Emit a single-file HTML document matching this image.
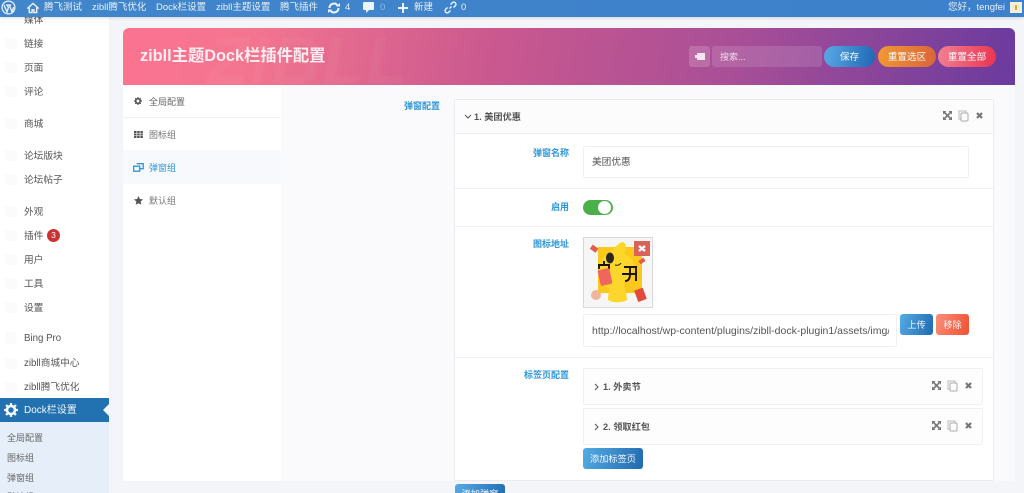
<!DOCTYPE html>
<html lang="zh"><head><meta charset="utf-8"><title>zibll Dock</title>
<style>
*{box-sizing:border-box}
html,body{margin:0;padding:0;width:1024px;height:493px;overflow:hidden;background:#f4f5f9;font-family:"Liberation Sans","Noto Sans CJK SC",sans-serif;color:#444}
#w{position:relative;width:1024px;height:493px;overflow:hidden;background:#f4f5f9}
.a{position:absolute;white-space:nowrap}
.t{position:absolute;white-space:nowrap;line-height:14px;font-size:10px}
.bar{position:absolute;left:0;top:0;width:1024px;height:17px;background:linear-gradient(90deg,#4186cb,#3d80cb);box-shadow:0 1px 3px rgba(0,0,0,.15);z-index:3}
.bar .t{color:#e8f0f8;top:1px;line-height:13px;font-size:9.500px}
.side{position:absolute;left:0;top:17px;width:109px;height:476px;background:#fff;overflow:hidden}
.m{color:#555;font-size:9.700px;left:24px}
.g{position:absolute;left:5px;width:12px;height:12px;border-radius:4px;background:#fbfbfc}
.sub{color:#666;font-size:9px;left:7px}
.lb{color:#2c96d8;font-size:9px;font-weight:bold;text-align:right;right:0}
.btn{position:absolute;color:#f4f8fc;text-align:center;font-size:9.200px}
.box{position:absolute;background:#fff;border:1px solid #eff0f3;border-radius:2px}
.hr{position:absolute;height:1px;background:#f0f1f4}
</style></head><body><div id="w">

<div class="bar">
<svg class="a" style="left:1px;top:0" width="15" height="15" viewBox="0 0 15 15"><circle cx="7.500" cy="7.500" r="6.400" fill="none" stroke="#eef4fb" stroke-width="1.200"/><path d="M3 5l3 7 1.500-4.500L6 5h4l-1.500.3L11 12l1.700-5" fill="none" stroke="#eef4fb" stroke-width="1.300"/></svg>
<svg class="a" style="left:27px;top:2px" width="12" height="12" viewBox="0 0 13 12"><path d="M6.500 1L1 6h1.500v5H5.500V8h2v3h3V6H12z" fill="none" stroke="#eef4fb" stroke-width="1.500"/></svg>
<span class="t" style="left:44px">腾飞测试</span>
<span class="t" style="left:92px">zibll腾飞优化</span>
<span class="t" style="left:156px">Dock栏设置</span>
<span class="t" style="left:216px">zibll主题设置</span>
<span class="t" style="left:280px">腾飞插件</span>
<svg class="a" style="left:328px;top:2px" width="12" height="12" viewBox="0 0 12 12"><path d="M1.500 6a4.500 4.500 0 0 1 8-2.800M10.500 6a4.500 4.500 0 0 1-8 2.800" fill="none" stroke="#eef4fb" stroke-width="2"/><path d="M8 4.500h4V1zM4 7.500H0V11z" fill="#eef4fb"/></svg>
<span class="t" style="left:345px">4</span>
<svg class="a" style="left:363px;top:2px" width="11" height="12" viewBox="0 0 11 12"><path d="M1 0h9a1 1 0 0 1 1 1v6a1 1 0 0 1-1 1H6l-3 3V8H1a1 1 0 0 1-1-1V1a1 1 0 0 1 1-1z" fill="#eef4fb"/></svg>
<span class="t" style="left:380px;color:#8fb9e2">0</span>
<svg class="a" style="left:398px;top:3px" width="10" height="10" viewBox="0 0 10 10"><path d="M4 0h2v4h4v2H6v4H4V6H0V4h4z" fill="#eef4fb"/></svg>
<span class="t" style="left:414px">新建</span>
<svg class="a" style="left:444px;top:1px" width="13" height="13" viewBox="0 0 13 13"><path d="M5.500 7.500l2-2M3.500 6.500l-1.800 1.800a2 2 0 0 0 3 3l1.800-1.800M9.500 6.500l1.800-1.800a2 2 0 0 0-3-3L6.500 3.500" fill="none" stroke="#eef4fb" stroke-width="1.400"/></svg>
<span class="t" style="left:461px">0</span>
<span class="t" style="left:948px">您好，tengfei</span>
<div class="a" style="left:1010px;top:2px;width:12px;height:11px;background:#f6efd8"></div>
<div class="a" style="left:1015px;top:5px;width:2px;height:5px;background:#e0a92c"></div>
</div>

<div class="side">
<div class="g" style="top:20px"></div><div class="g" style="top:44px"></div><div class="g" style="top:68px"></div><div class="g" style="top:100px"></div><div class="g" style="top:132px"></div><div class="g" style="top:156px"></div><div class="g" style="top:188px"></div><div class="g" style="top:212px"></div><div class="g" style="top:236px"></div><div class="g" style="top:260px"></div><div class="g" style="top:284px"></div><div class="g" style="top:315px"></div><div class="g" style="top:340px"></div><div class="g" style="top:364px"></div>
<span class="t m" style="top:-3px">媒体</span>
<span class="t m" style="top:21px">链接</span>
<span class="t m" style="top:45px">页面</span>
<span class="t m" style="top:69px">评论</span>
<span class="t m" style="top:101px">商城</span>
<span class="t m" style="top:133px">论坛版块</span>
<span class="t m" style="top:157px">论坛帖子</span>
<span class="t m" style="top:189px">外观</span>
<span class="t m" style="top:213px">插件</span>
<div class="a" style="left:47px;top:212px;width:13px;height:13px;border-radius:50%;background:#ca3232;color:#fff;font-size:8.500px;line-height:13px;text-align:center">3</div>
<span class="t m" style="top:237px">用户</span>
<span class="t m" style="top:261px">工具</span>
<span class="t m" style="top:285px">设置</span>
<span class="t m" style="top:315px">Bing Pro</span>
<span class="t m" style="top:340px">zibll商城中心</span>
<span class="t m" style="top:364px">zibll腾飞优化</span>
<div class="a" style="left:0;top:381px;width:109px;height:24px;background:#2271b1"></div>
<svg class="a" style="left:4px;top:386px" width="14" height="14" viewBox="0 0 14 14"><circle cx="7" cy="7" r="4" fill="none" stroke="#f3f7fb" stroke-width="2.600"/><path d="M7 0v3M7 11v3M0 7h3M11 7h3M2 2l2.200 2.200M9.800 9.800L12 12M12 2L9.800 4.200M4.200 9.800L2 12" stroke="#f3f7fb" stroke-width="2.200"/></svg>
<span class="t" style="left:24px;top:387px;color:#f3f7fb;font-size:10px">Dock栏设置</span>
<div class="a" style="left:103px;top:387px;width:0;height:0;border:6px solid transparent;border-left:0;border-right-color:#f4f5f9"></div>
<div class="a" style="left:0;top:405px;width:109px;height:71px;background:#e6eff9"></div>
<span class="t sub" style="top:414px">全局配置</span>
<span class="t sub" style="top:434px">图标组</span>
<span class="t sub" style="top:454px">弹窗组</span>
<span class="t sub" style="top:473px">默认组</span>
</div>

<div class="a" style="left:123px;top:84px;width:892px;height:397px;background:#fafafc"></div>
<div class="a" style="left:123px;top:84px;width:158px;height:397px;background:#fff"></div>

<div class="a" style="left:123px;top:28px;width:892px;height:57px;border-radius:6px 6px 0 0;background:linear-gradient(100deg,#fb7390 0%,#f4758f 14%,#c9588f 42%,#a94f97 68%,#6a3b9e 100%);overflow:hidden">
<div class="a" style="left:84px;top:-3px;font-size:68px;font-weight:bold;font-style:italic;color:rgba(255,255,255,.035);line-height:72px;letter-spacing:2px">ZIBLL</div>
<span class="t" style="left:17px;top:18px;font-size:16.300px;line-height:20px;font-weight:bold;color:#fbeef2">zibll主题Dock栏插件配置</span>
<div class="a" style="left:566px;top:18px;width:21px;height:21px;border-radius:3px;background:rgba(255,255,255,.17)"></div>
<div class="a" style="left:572px;top:25px;width:10px;height:7px;background:#f3e6f1;border-left:2px dotted #b968a4"></div>
<div class="a" style="left:589px;top:18px;width:110px;height:21px;border-radius:3px;background:rgba(255,255,255,.13)"></div>
<span class="t" style="left:597px;top:22px;font-size:9px;line-height:15px;color:#f0dcea">搜索...</span>
<div class="btn" style="left:701px;top:18px;width:51px;height:21px;line-height:23px;border-radius:11px;background:linear-gradient(100deg,#5aa9e6,#1e68b4);font-size:9.600px">保存</div>
<div class="btn" style="left:755px;top:18px;width:58px;height:21px;line-height:23px;border-radius:11px;background:linear-gradient(100deg,#f09a34,#d9643a);font-size:9.600px">重置选区</div>
<div class="btn" style="left:815px;top:18px;width:58px;height:21px;line-height:23px;border-radius:11px;background:linear-gradient(100deg,#f18192,#ea3350);font-size:9.600px">重置全部</div>
</div>

<!-- left nav -->
<div class="hr" style="left:123px;top:117px;width:158px"></div>
<div class="a" style="left:123px;top:150px;width:158px;height:34px;background:#f8f9fc"></div>
<svg class="a" style="left:134px;top:97px" width="8" height="8" viewBox="0 0 8 8"><circle cx="4" cy="4" r="2.300" fill="none" stroke="#555" stroke-width="1.700"/><path d="M4 0v1.500M4 6.500V8M0 4h1.500M6.500 4H8M1.200 1.200l1 1M5.800 5.800l1 1M6.800 1.200l-1 1M2.200 5.800l-1 1" stroke="#555" stroke-width="1.200"/></svg>
<span class="t" style="left:149px;top:95px;color:#666;font-size:9px">全局配置</span>
<svg class="a" style="left:134px;top:131px" width="9" height="7" viewBox="0 0 9 7" fill="#555"><rect width="2.500" height="2"/><rect x="3.200" width="2.500" height="2"/><rect x="6.400" width="2.500" height="2"/><rect y="2.500" width="2.500" height="2"/><rect x="3.200" y="2.500" width="2.500" height="2"/><rect x="6.400" y="2.500" width="2.500" height="2"/><rect y="5" width="2.500" height="2"/><rect x="3.200" y="5" width="2.500" height="2"/><rect x="6.400" y="5" width="2.500" height="2"/></svg>
<span class="t" style="left:149px;top:128px;color:#777;font-size:9px">图标组</span>
<svg class="a" style="left:133px;top:163px" width="11" height="9" viewBox="0 0 11 9"><path d="M.7 3.200h6v5h-6z" fill="none" stroke="#2c96d8" stroke-width="1.300"/><path d="M3.700 .7h6.500v5H7" fill="none" stroke="#2c96d8" stroke-width="1.300"/></svg>
<span class="t" style="left:149px;top:161px;color:#2c96d8;font-size:9px">弹窗组</span>
<svg class="a" style="left:134px;top:196px" width="9" height="9" viewBox="0 0 10 10"><path d="M5 0l1.500 3.300 3.500.4-2.600 2.400.7 3.600L5 8 1.900 9.700l.7-3.600L0 3.700l3.500-.4z" fill="#555"/></svg>
<span class="t" style="left:149px;top:194px;color:#777;font-size:9px">默认组</span>

<!-- content -->
<span class="t lb" style="left:404px;right:auto;top:99px;width:36px">弹窗配置</span>

<div class="box" style="left:454px;top:99px;width:540px;height:382px;background:#fff;border-color:#e9ebef"></div>
<div class="a" style="left:455px;top:100px;width:538px;height:34px;background:#fcfcfd;border-bottom:1px solid #eceef2"></div>
<svg class="a" style="left:464px;top:114px" width="8" height="6" viewBox="0 0 8 6"><path d="M1 1l3 3 3-3" fill="none" stroke="#555" stroke-width="1"/></svg>
<span class="t" style="left:474px;top:110px;font-size:9.200px;font-weight:bold;color:#555">1. 美团优惠</span>

<svg class="a" style="left:943px;top:111px" width="9" height="9" viewBox="0 0 9 9"><path d="M0 0h3.500L0 3.500zM9 0v3.500L5.500 0zM0 9V5.500L3.500 9zM9 9H5.500L9 5.500z" fill="#777"/><path d="M1.500 1.500l6 6M7.500 1.500l-6 6" stroke="#777" stroke-width="1.600"/></svg>
<svg class="a" style="left:958px;top:110px" width="11" height="12" viewBox="0 0 11 12"><path d="M8 2.500V1H1v8h2" fill="none" stroke="#bbb"/><rect x="3" y="3" width="7" height="8" rx="1" fill="none" stroke="#aaa"/></svg>
<svg class="a" style="left:976px;top:112px" width="7" height="7" viewBox="0 0 7 7"><path d="M1 1l5 5M6 1L1 6" stroke="#777" stroke-width="2.200"/></svg>

<span class="t lb" style="left:533px;right:auto;top:146px;width:36px">弹窗名称</span>
<div class="box" style="left:583px;top:146px;width:386px;height:32px"></div>
<span class="t" style="left:592px;top:156px;font-size:9.700px;color:#555">美团优惠</span>
<div class="hr" style="left:455px;top:188px;width:538px"></div>

<span class="t lb" style="left:551px;right:auto;top:200px;width:18px">启用</span>
<div class="a" style="left:583px;top:200px;width:30px;height:15px;border-radius:8px;background:#4cb04a"></div>
<div class="a" style="left:598px;top:201px;width:13px;height:13px;border-radius:50%;background:#fff"></div>
<div class="hr" style="left:455px;top:226px;width:538px"></div>

<span class="t lb" style="left:533px;right:auto;top:237px;width:36px">图标地址</span>
<div class="a" style="left:583px;top:237px;width:70px;height:71px;border:1px solid #d9d9d9;background:#f6f6f6"></div>
<svg class="a" style="left:584px;top:238px" width="68" height="69" viewBox="0 0 68 69">
<rect x="14" y="9" width="44" height="46" fill="#fcc81c"/>
<path d="M24 16c4-3 10-11 14-12 4 0 5 5 2 12 8 3 12 8 9 15-2 6-6 10-9 14 0 5 3 10 3 17-5 3-14 3-19 0 0-4 1-8 1-12-7-2-12-9-11-18 0-7 5-13 10-16z" fill="#fcd62a"/>
<ellipse cx="26" cy="20" rx="4" ry="5.500" fill="#2b2420"/>
<path d="M31 27q4 1 6-2" fill="none" stroke="#2b2420" stroke-width="1"/>
<path d="M20 23v3M14 27h12M15 27v4M25 27v4M40 29h13M46 29v7c0 5-2 7-5 7M52 29v14M38 36h15" stroke="#1b1408" stroke-width="1.900" fill="none"/>
<rect x="15" y="31" width="12" height="16" rx="2" transform="rotate(-12 21 39)" fill="#f0665f"/>
<rect x="52" y="51" width="9" height="12" transform="rotate(-20 56 57)" fill="#e24a3c"/>
<circle cx="12" cy="57" r="5" fill="#eeb79a"/>
<rect x="7" y="8" width="7" height="5" transform="rotate(35 10 10)" fill="#e25d50"/>
<rect x="55" y="21" width="6" height="4" transform="rotate(-35 58 23)" fill="#e25d50"/>
<rect x="50" y="3" width="16" height="15" fill="#d9625a"/>
<path d="M55 8l6 5M61 8l-6 5" stroke="#fff" stroke-width="2.400"/>
</svg>

<div class="box" style="left:583px;top:314px;width:314px;height:33px"></div>
<span class="a" style="left:592px;top:324px;width:297px;overflow:hidden;font-size:10.500px;line-height:14px;color:#555">http://localhost/wp-content/plugins/zibll-dock-plugin1/assets/img/meituan.png</span>
<div class="btn" style="left:900px;top:314px;width:33px;height:21px;line-height:22px;border-radius:3px;background:linear-gradient(110deg,#56abe4,#1f69b0)">上传</div>
<div class="btn" style="left:936px;top:314px;width:33px;height:21px;line-height:22px;border-radius:3px;background:linear-gradient(110deg,#fa8f7a,#f0502f)">移除</div>
<div class="hr" style="left:455px;top:357px;width:538px"></div>

<span class="t lb" style="left:523px;right:auto;top:368px;width:46px">标签页配置</span>

<div class="box" style="left:583px;top:368px;width:400px;height:37px;background:#fdfdfd"></div>
<svg class="a" style="left:594px;top:383px" width="6" height="8" viewBox="0 0 6 8"><path d="M1 1l3 3-3 3" fill="none" stroke="#555" stroke-width="1"/></svg>
<span class="t" style="left:603px;top:380px;font-size:9.200px;font-weight:bold;color:#555">1. 外卖节</span>
<svg class="a" style="left:932px;top:381px" width="9" height="9" viewBox="0 0 9 9"><path d="M0 0h3.500L0 3.500zM9 0v3.500L5.500 0zM0 9V5.500L3.500 9zM9 9H5.500L9 5.500z" fill="#777"/><path d="M1.500 1.500l6 6M7.500 1.500l-6 6" stroke="#777" stroke-width="1.600"/></svg>
<svg class="a" style="left:947px;top:380px" width="11" height="12" viewBox="0 0 11 12"><path d="M8 2.500V1H1v8h2" fill="none" stroke="#bbb"/><rect x="3" y="3" width="7" height="8" rx="1" fill="none" stroke="#aaa"/></svg>
<svg class="a" style="left:965px;top:382px" width="7" height="7" viewBox="0 0 7 7"><path d="M1 1l5 5M6 1L1 6" stroke="#777" stroke-width="2.200"/></svg>

<div class="box" style="left:583px;top:408px;width:400px;height:37px;background:#fdfdfd"></div>
<svg class="a" style="left:594px;top:423px" width="6" height="8" viewBox="0 0 6 8"><path d="M1 1l3 3-3 3" fill="none" stroke="#555" stroke-width="1"/></svg>
<span class="t" style="left:603px;top:420px;font-size:9.200px;font-weight:bold;color:#555">2. 领取红包</span>
<svg class="a" style="left:932px;top:421px" width="9" height="9" viewBox="0 0 9 9"><path d="M0 0h3.500L0 3.500zM9 0v3.500L5.500 0zM0 9V5.500L3.500 9zM9 9H5.500L9 5.500z" fill="#777"/><path d="M1.500 1.500l6 6M7.500 1.500l-6 6" stroke="#777" stroke-width="1.600"/></svg>
<svg class="a" style="left:947px;top:420px" width="11" height="12" viewBox="0 0 11 12"><path d="M8 2.500V1H1v8h2" fill="none" stroke="#bbb"/><rect x="3" y="3" width="7" height="8" rx="1" fill="none" stroke="#aaa"/></svg>
<svg class="a" style="left:965px;top:422px" width="7" height="7" viewBox="0 0 7 7"><path d="M1 1l5 5M6 1L1 6" stroke="#777" stroke-width="2.200"/></svg>

<div class="btn" style="left:583px;top:448px;width:60px;height:21px;line-height:22px;border-radius:3px;background:linear-gradient(110deg,#56abe4,#1f69b0)">添加标签页</div>
<div class="btn" style="left:455px;top:484px;width:50px;height:21px;line-height:20px;border-radius:3px;background:linear-gradient(110deg,#56abe4,#1f69b0)">添加弹窗</div>

</div></body></html>
